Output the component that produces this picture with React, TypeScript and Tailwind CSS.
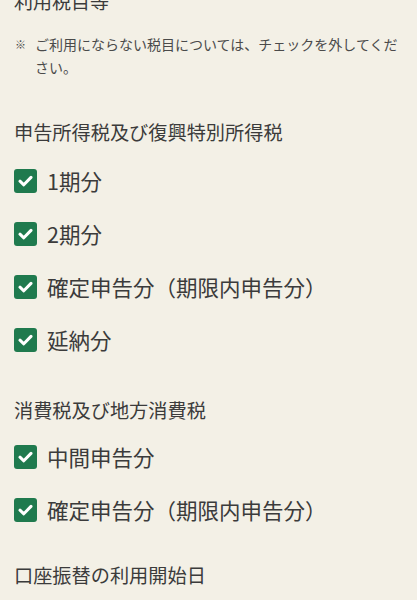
import React from "react";

const Check = ({ label }: { label: string }) => (
  <div className="flex h-[53px] items-center">
    <div className="flex h-[24px] w-[23px] items-center justify-center rounded-[3px] bg-[#1f7a4e]">
      <svg width="15" height="12" viewBox="0 0 15 12" fill="none">
        <path d="M2 6.2 L5.8 9.8 L13 2.4" stroke="#ffffff" strokeWidth="3" strokeLinecap="round" strokeLinejoin="round" />
      </svg>
    </div>
    <span className="ml-[10px] text-[21.5px] leading-[24px] text-[#3b3b3b]">{label}</span>
  </div>
);

export default function App() {
  return (
    <div
      className="h-[600px] w-[417px] overflow-hidden bg-[#f3f0e6] pl-[14px] pr-[10px]"
      style={{ fontFamily: '"Noto Sans CJK JP", "Noto Sans", sans-serif' }}
    >
      <div className="-mt-[11px] h-[24px] text-[19px] leading-[24px] text-[#3b3b3b]">利用税目等</div>
      <div className="mt-[20px] flex text-[14px] leading-[23px] text-[#4a4a4a]">
        <span className="w-[21px] shrink-0 pl-[1px] text-[11px]">※</span>
        <span>ご利用にならない税目については、チェックを外してください。</span>
      </div>
      <div className="mt-[41px] h-[24px] text-[19.2px] leading-[24px] text-[#3b3b3b]">申告所得税及び復興特別所得税</div>
      <div className="mt-[10px] flex flex-col">
        <Check label="1期分" />
        <Check label="2期分" />
        <Check label="確定申告分（期限内申告分）" />
        <Check label="延納分" />
      </div>
      <div className="mt-[32px] h-[24px] text-[19.2px] leading-[24px] text-[#3b3b3b]">消費税及び地方消費税</div>
      <div className="mt-[8px] flex flex-col">
        <Check label="中間申告分" />
        <Check label="確定申告分（期限内申告分）" />
      </div>
      <div className="mt-[27px] h-[24px] text-[19.2px] leading-[24px] text-[#3b3b3b]">口座振替の利用開始日</div>
    </div>
  );
}
